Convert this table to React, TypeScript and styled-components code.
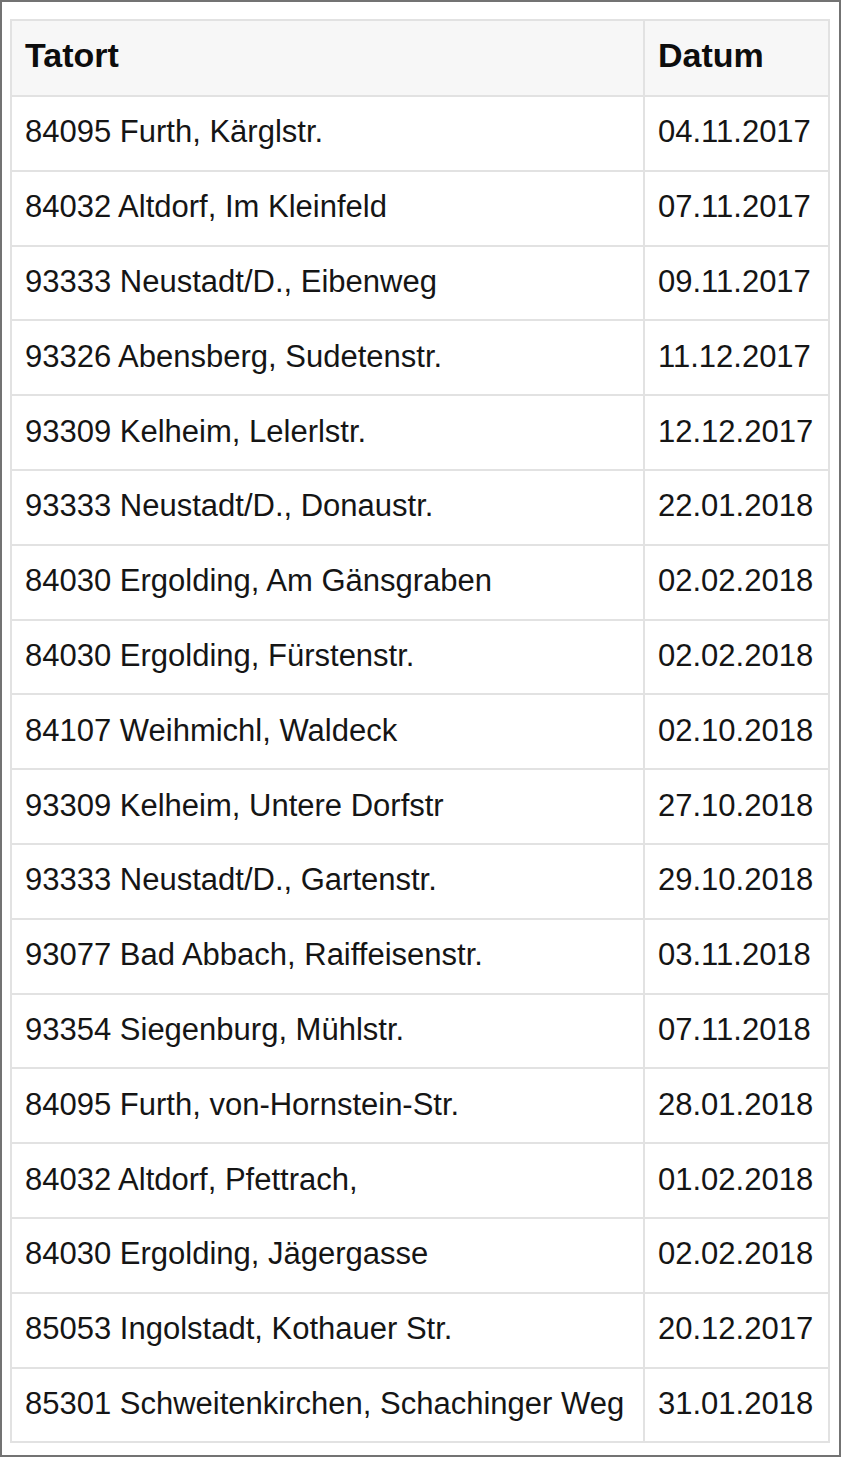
import React from "react";
import styled, { createGlobalStyle } from "styled-components";

interface Incident {
  place: string;
  date: string;
}

const incidents: Incident[] = [
  { place: "84095 Furth, Kärglstr.", date: "04.11.2017" },
  { place: "84032 Altdorf, Im Kleinfeld", date: "07.11.2017" },
  { place: "93333 Neustadt/D., Eibenweg", date: "09.11.2017" },
  { place: "93326 Abensberg, Sudetenstr.", date: "11.12.2017" },
  { place: "93309 Kelheim, Lelerlstr.", date: "12.12.2017" },
  { place: "93333 Neustadt/D., Donaustr.", date: "22.01.2018" },
  { place: "84030 Ergolding, Am Gänsgraben", date: "02.02.2018" },
  { place: "84030 Ergolding, Fürstenstr.", date: "02.02.2018" },
  { place: "84107 Weihmichl, Waldeck", date: "02.10.2018" },
  { place: "93309 Kelheim, Untere Dorfstr", date: "27.10.2018" },
  { place: "93333 Neustadt/D., Gartenstr.", date: "29.10.2018" },
  { place: "93077 Bad Abbach, Raiffeisenstr.", date: "03.11.2018" },
  { place: "93354 Siegenburg, Mühlstr.", date: "07.11.2018" },
  { place: "84095 Furth, von-Hornstein-Str.", date: "28.01.2018" },
  { place: "84032 Altdorf, Pfettrach,", date: "01.02.2018" },
  { place: "84030 Ergolding, Jägergasse", date: "02.02.2018" },
  { place: "85053 Ingolstadt, Kothauer Str.", date: "20.12.2017" },
  { place: "85301 Schweitenkirchen, Schachinger Weg", date: "31.01.2018" },
];

const GlobalStyle = createGlobalStyle`
  html, body {
    margin: 0;
    padding: 0;
    background: #ffffff;
  }
  body {
    font-family: "Liberation Sans", Arial, Helvetica, sans-serif;
    color: #151515;
  }
`;

const Frame = styled.div`
  box-sizing: border-box;
  width: 841px;
  height: 1457px;
  border: 2px solid #737373;
  padding: 17px 0 0 8px;
  background: #ffffff;
`;

const Table = styled.table`
  border-collapse: collapse;
  table-layout: fixed;
  width: 818px;
  border: 2px solid #e2e2e2;
`;

const HeadCell = styled.th`
  box-sizing: border-box;
  height: 76px;
  padding: 0 12px 5px 13px;
  border: 2px solid #e2e2e2;
  background: #f7f7f7;
  text-align: left;
  font-size: 34px;
  font-weight: 700;
  color: #0d0d0d;
`;

const Cell = styled.td`
  box-sizing: border-box;
  height: 74.8px;
  padding: 0 12px 2px 13px;
  border: 2px solid #e2e2e2;
  font-size: 31px;
  color: #151515;
  white-space: nowrap;
`;

export default function App() {
  return (
    <>
      <GlobalStyle />
      <Frame>
        <Table>
          <colgroup>
            <col style={{ width: 633 }} />
            <col style={{ width: 185 }} />
          </colgroup>
          <thead>
            <tr>
              <HeadCell>Tatort</HeadCell>
              <HeadCell>Datum</HeadCell>
            </tr>
          </thead>
          <tbody>
            {incidents.map((row, i) => (
              <tr key={i}>
                <Cell>{row.place}</Cell>
                <Cell>{row.date}</Cell>
              </tr>
            ))}
          </tbody>
        </Table>
      </Frame>
    </>
  );
}
